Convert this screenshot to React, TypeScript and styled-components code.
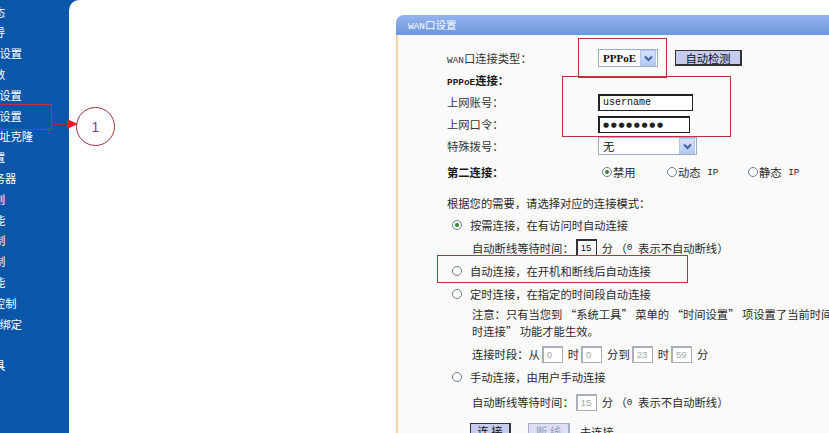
import React from 'react';
import styled, { createGlobalStyle } from 'styled-components';

const GlobalStyle = createGlobalStyle`
  html, body {
    margin: 0;
    padding: 0;
    overflow: hidden;
    background: #ffffff;
  }
`;

const Page = styled.div`
  position: relative;
  display: flex;
  width: 829px;
  height: 433px;
  overflow: hidden;
  background: #0a56a8;
  font-family: 'Noto Sans CJK SC', sans-serif;
  font-size: 11.3px;
  color: #2a2a2a;
`;

const Sidebar = styled.nav`
  flex: none;
  width: 69px;
  padding-top: 1.6px;
  overflow: hidden;
  color: #ffffff;
`;

const MenuItem = styled.div<{ $sub?: boolean }>`
  height: 20.8px;
  line-height: 20.8px;
  white-space: nowrap;
  margin-left: ${({ $sub }) => ($sub ? -29 : -40)}px;
`;

// half-width latin, the way the router's SimSun page sets it
const Latin = styled.span<{ $bold?: boolean }>`
  font-family: 'Liberation Mono', monospace;
  font-size: 9.4px;
  font-weight: ${({ $bold }) => ($bold ? 700 : 400)};
  white-space: pre;
`;

const Main = styled.main`
  flex: 1;
  display: flex;
  min-width: 0;
  overflow: hidden;
  background: #ffffff;
  border-top-left-radius: 10px;
  padding: 15px 0 0 327px;
`;

const Panel = styled.section`
  flex: none;
  width: 520px;
  display: flex;
  flex-direction: column;
`;

const PanelHeader = styled.header`
  height: 20px;
  line-height: 20px;
  padding-left: 12px;
  border-top-left-radius: 8px;
  background: linear-gradient(#93b4ee, #6e96dc);
  color: #ffffff;
  font-size: 10.5px;
`;

const PanelBody = styled.div`
  flex: 1;
  border-left: 2px solid #e8d69e;
  background: #fafafa;
  padding: 12px 0 0 49px;
`;

const FormRow = styled.div<{ $gap?: number }>`
  display: flex;
  align-items: center;
  height: 22px;
  margin-top: ${({ $gap }) => $gap ?? 0}px;
  white-space: nowrap;
`;

const Label = styled.div<{ $bold?: boolean }>`
  width: 151px;
  flex: none;
  font-weight: ${({ $bold }) => ($bold ? 700 : 400)};
  color: ${({ $bold }) => ($bold ? '#1a1a1a' : '#333')};
`;

const Select = styled.div<{ $width: number }>`
  display: flex;
  align-items: center;
  justify-content: space-between;
  box-sizing: border-box;
  width: ${({ $width }) => $width}px;
  height: 18px;
  padding: 0 1px 0 4px;
  border: 1px solid #9aaec8;
  background: #ffffff;
`;

const SelectText = styled.span<{ $mono?: boolean }>`
  font-family: ${({ $mono }) =>
    $mono ? "'Liberation Serif', serif" : "'Noto Sans CJK SC', sans-serif"};
  font-size: ${({ $mono }) => ($mono ? '11px' : '11.3px')};
  font-weight: ${({ $mono }) => ($mono ? 700 : 400)};
  color: #111;
`;

const ArrowButton = styled.span`
  display: flex;
  align-items: center;
  justify-content: center;
  width: 14px;
  height: 14px;
  border: 1px solid #b3c8ef;
  background: linear-gradient(#d6e3fb, #b4cbf5);
`;

const TextBox = styled.div<{ $width: number }>`
  box-sizing: border-box;
  width: ${({ $width }) => $width}px;
  height: 17px;
  line-height: 14px;
  padding-left: 3px;
  border: 1px solid #222;
  border-top-width: 2px;
  border-left-width: 2px;
  background: #ffffff;
  font-family: 'Liberation Mono', monospace;
  font-size: 10px;
  color: #111;
`;

const Dots = styled.span`
  font-family: 'DejaVu Sans', sans-serif;
  font-size: 7px;
  letter-spacing: 1.6px;
  color: #222;
`;

const Button = styled.button<{ $disabled?: boolean; $width: number }>`
  box-sizing: border-box;
  width: ${({ $width }) => $width}px;
  height: ${({ $disabled }) => ($disabled ? 17 : 16)}px;
  padding: 0;
  margin: 0;
  font-family: 'Noto Sans CJK SC', sans-serif;
  font-size: 11.3px;
  line-height: 12px;
  color: ${({ $disabled }) => ($disabled ? '#9aa0bc' : '#111')};
  background: ${({ $disabled }) => ($disabled ? '#dde0f5' : '#c6cbf0')};
  border: 1px solid ${({ $disabled }) => ($disabled ? '#a8adc8' : '#333')};
  border-right-width: 2px;
  border-bottom-width: 2px;
`;

const RadioGroup = styled.div`
  display: flex;
  align-items: center;
`;

const RadioLabel = styled.span<{ $width?: number }>`
  display: flex;
  align-items: center;
  gap: 1px;
  width: ${({ $width }) => ($width ? `${$width}px` : 'auto')};
`;

const Radio = styled.span<{ $checked?: boolean }>`
  position: relative;
  flex: none;
  box-sizing: border-box;
  width: 10px;
  height: 10px;
  border-radius: 50%;
  border: 1px solid #6f7f92;
  background: #ffffff;

  &::after {
    content: '';
    display: ${({ $checked }) => ($checked ? 'block' : 'none')};
    position: absolute;
    left: 2px;
    top: 2px;
    width: 4px;
    height: 4px;
    border-radius: 50%;
    background: #2c8a34;
  }
`;

const Prompt = styled.div`
  height: 22px;
  line-height: 22px;
  margin-top: 9px;
  white-space: nowrap;
`;

const OptionRow = styled.div<{ $height: number }>`
  display: flex;
  align-items: center;
  gap: 8px;
  height: ${({ $height }) => $height}px;
  padding-left: 5px;
  white-space: nowrap;
`;

const SubRow = styled.div<{ $height: number }>`
  display: flex;
  align-items: center;
  height: ${({ $height }) => $height}px;
  padding-left: 25px;
  white-space: pre;
`;

const Note = styled.p`
  margin: 0;
  padding: 1px 0 3px 25px;
  line-height: 17px;
  white-space: nowrap;
`;

const NumBox = styled.span<{ $disabled?: boolean }>`
  box-sizing: border-box;
  display: inline-block;
  width: 21px;
  height: 17px;
  line-height: 14px;
  margin: 0 5px 0 2px;
  padding-left: 3px;
  border: 1px solid ${({ $disabled }) => ($disabled ? '#a9b0b8' : '#333')};
  border-top-width: 2px;
  border-left-width: 2px;
  background: #ffffff;
  font-family: 'Liberation Sans', sans-serif;
  font-size: 9.5px;
  color: ${({ $disabled }) => ($disabled ? '#a0a6ae' : '#111')};
`;

const ButtonRow = styled.div`
  display: flex;
  align-items: flex-start;
  gap: 17px;
  margin-top: 8px;
  padding-left: 23px;
  white-space: nowrap;
`;

const StatusText = styled.span`
  line-height: 18px;
  margin-left: -7px;
`;

const Mark = styled.div<{ $x: number; $y: number; $w: number; $h: number }>`
  position: absolute;
  left: ${({ $x }) => $x}px;
  top: ${({ $y }) => $y}px;
  width: ${({ $w }) => $w}px;
  height: ${({ $h }) => $h}px;
  box-sizing: border-box;
  border: 1.5px solid #b8323f;
  pointer-events: none;
`;

const Callout = styled.div`
  position: absolute;
  left: 76px;
  top: 107px;
  width: 39px;
  height: 39px;
  box-sizing: border-box;
  border: 1px solid #9c3444;
  border-radius: 50%;
  display: flex;
  align-items: center;
  justify-content: center;
  font-family: 'Liberation Sans', sans-serif;
  font-size: 14px;
  color: #8a3f9c;
`;

const CalloutArrow = styled.svg`
  position: absolute;
  left: 51px;
  top: 118px;
`;

const Chevron = () => (
  <svg width="9" height="7" viewBox="0 0 9 7">
    <polyline points="1,1.5 4.5,5 8,1.5" fill="none" stroke="#3d5fa8" strokeWidth="2" />
  </svg>
);

const menu: { text: React.ReactNode; sub?: boolean }[] = [
  { text: '运行状态' },
  { text: '设置向导' },
  { text: <><Latin>QSS</Latin>安全设置</> },
  { text: '网络参数' },
  { text: <><Latin>LAN</Latin>口设置</>, sub: true },
  { text: <><Latin>WAN</Latin>口设置</>, sub: true },
  { text: <><Latin>MAC</Latin>地址克隆</>, sub: true },
  { text: '无线设置' },
  { text: <><Latin>DHCP</Latin>服务器</> },
  { text: '转发规则' },
  { text: '安全功能' },
  { text: '家长控制' },
  { text: '上网控制' },
  { text: '路由功能' },
  { text: <><Latin>IP</Latin>带宽控制</> },
  { text: <><Latin>IP</Latin>与<Latin>MAC</Latin>绑定</> },
  { text: <>动态<Latin>DNS</Latin></> },
  { text: '系统工具' },
];

const App = () => (
  <Page>
    <GlobalStyle />
    <Sidebar>
      {menu.map((item, i) => (
        <MenuItem key={i} $sub={item.sub}>
          {item.text}
        </MenuItem>
      ))}
    </Sidebar>

    <Main>
      <Panel>
        <PanelHeader>
          <Latin>WAN</Latin>口设置
        </PanelHeader>
        <PanelBody>
          <FormRow>
            <Label>
              <Latin>WAN</Latin>口连接类型：
            </Label>
            <Select $width={60}>
              <SelectText $mono>PPPoE</SelectText>
              <ArrowButton>
                <Chevron />
              </ArrowButton>
            </Select>
            <Button $width={67} style={{ marginLeft: 17 }}>
              自动检测
            </Button>
          </FormRow>
          <FormRow>
            <Label $bold>
              <Latin $bold>PPPoE</Latin>连接：
            </Label>
          </FormRow>
          <FormRow>
            <Label>上网账号：</Label>
            <TextBox $width={95}>username</TextBox>
          </FormRow>
          <FormRow>
            <Label>上网口令：</Label>
            <TextBox $width={92}>
              <Dots>●●●●●●●●</Dots>
            </TextBox>
          </FormRow>
          <FormRow>
            <Label>特殊拨号：</Label>
            <Select $width={99}>
              <SelectText>无</SelectText>
              <ArrowButton>
                <Chevron />
              </ArrowButton>
            </Select>
          </FormRow>
          <FormRow $gap={4}>
            <Label $bold>第二连接：</Label>
            <RadioGroup>
              <RadioLabel $width={65} style={{ paddingLeft: 4 }}>
                <Radio $checked />
                禁用
              </RadioLabel>
              <RadioLabel $width={81}>
                <Radio />
                动态<Latin> IP</Latin>
              </RadioLabel>
              <RadioLabel>
                <Radio />
                静态<Latin> IP</Latin>
              </RadioLabel>
            </RadioGroup>
          </FormRow>

          <Prompt>根据您的需要，请选择对应的连接模式：</Prompt>
          <OptionRow $height={22}>
            <Radio $checked />
            按需连接，在有访问时自动连接
          </OptionRow>
          <SubRow $height={23}>
            自动断线等待时间：<NumBox>15</NumBox>分 （<Latin>0 </Latin>表示不自动断线）
          </SubRow>
          <OptionRow $height={23}>
            <Radio />
            自动连接，在开机和断线后自动连接
          </OptionRow>
          <OptionRow $height={23}>
            <Radio />
            定时连接，在指定的时间段自动连接
          </OptionRow>
          <Note>
            注意：只有当您到 “系统工具” 菜单的 “时间设置” 项设置了当前时间后，“定
            <br />
            时连接” 功能才能生效。
          </Note>
          <SubRow $height={22}>
            连接时段：从<NumBox $disabled>0</NumBox>时<NumBox $disabled>0</NumBox>分到
            <NumBox $disabled>23</NumBox>时<NumBox $disabled>59</NumBox>分
          </SubRow>
          <OptionRow $height={24}>
            <Radio />
            手动连接，由用户手动连接
          </OptionRow>
          <SubRow $height={26}>
            自动断线等待时间：<NumBox $disabled>15</NumBox>分 （<Latin>0 </Latin>表示不自动断线）
          </SubRow>
          <ButtonRow>
            <Button $width={41}>连 接</Button>
            <Button $width={42} $disabled>
              断 线
            </Button>
            <StatusText>未连接</StatusText>
          </ButtonRow>
        </PanelBody>
      </Panel>
    </Main>

    <Mark $x={-2} $y={104} $w={54} $h={26} />
    <CalloutArrow width="28" height="12" viewBox="0 0 28 12">
      <line x1="0" y1="6" x2="19" y2="6" stroke="#c0222e" strokeWidth="1.5" />
      <polygon points="16,1 27,6 16,11" fill="#e01e24" />
    </CalloutArrow>
    <Callout>1</Callout>

    <Mark $x={578} $y={38} $w={89} $h={40} />
    <Mark $x={562} $y={76} $w={169} $h={61} />
    <Mark $x={437} $y={255} $w={251} $h={28} />
  </Page>
);

export default App;
